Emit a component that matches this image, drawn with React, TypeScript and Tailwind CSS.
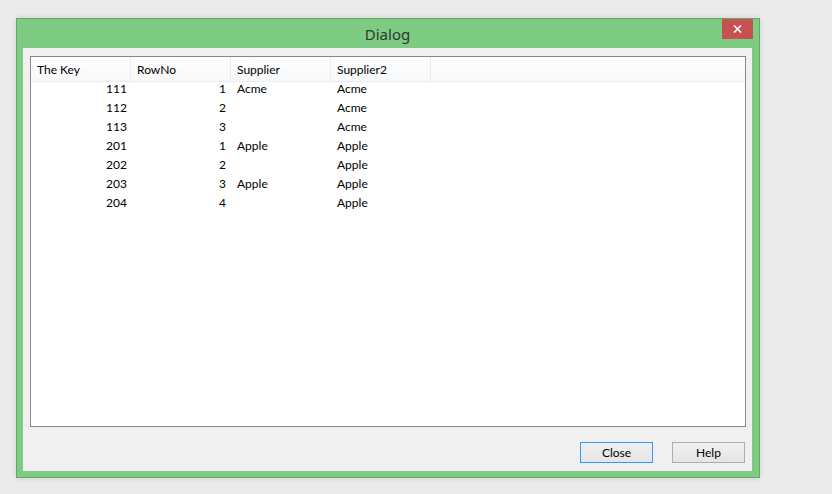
import React from "react";

const rows = [
  { key: "111", no: "1", s: "Acme", s2: "Acme" },
  { key: "112", no: "2", s: "", s2: "Acme" },
  { key: "113", no: "3", s: "", s2: "Acme" },
  { key: "201", no: "1", s: "Apple", s2: "Apple" },
  { key: "202", no: "2", s: "", s2: "Apple" },
  { key: "203", no: "3", s: "Apple", s2: "Apple" },
  { key: "204", no: "4", s: "", s2: "Apple" },
];

const headers = ["The Key", "RowNo", "Supplier", "Supplier2"];

const ui = { fontFamily: 'Lato, "Noto Sans", "Liberation Sans", sans-serif' };

export default function App() {
  return (
    <div
      className="w-[832px] h-[494px] bg-[#ebebeb] pt-[18px] pl-[16px] overflow-hidden"
      style={{ fontFamily: '"Noto Sans", "Liberation Sans", sans-serif' }}
    >
      <div className="w-[744px] h-[460px] border border-[#62a867] bg-[#7ecb84] flex flex-col pl-[6px] pr-[7px] pb-[6px] shadow-[0_0_6px_rgba(0,0,0,0.12)]">
        {/* title bar */}
        <div className="h-[29px] flex items-start relative shrink-0">
          <div className="flex-1 text-center text-[15px] leading-[30px] text-[#2b3a2d] pl-[30px]">Dialog</div>
          <div className="w-[31px] h-[20px] bg-[#c75050] flex items-center justify-center mr-[-1px]">
            <svg width="9" height="8" viewBox="0 0 9 8">
              <path d="M1 0.5 L8 7.5 M8 0.5 L1 7.5" stroke="#ffffff" strokeWidth="1.6" />
            </svg>
          </div>
        </div>
        {/* client */}
        <div className="flex-1 bg-[#f0f0f0] flex flex-col pl-[7px] pr-[6px] pt-[8px] pb-[8px]" style={ui}>
          <div className="h-[371px] border border-[#828790] bg-white flex flex-col">
            <div className="h-[25px] flex bg-gradient-to-b from-[#ffffff] to-[#f7f8fa] border-b border-[#e8eef6] shrink-0">
              {headers.map((h) => (
                <div
                  key={h}
                  className="w-[100px] border-r border-[#e6edf5] text-[12px] text-[#000] pl-[6px] pt-[1px] flex items-center"
                >
                  {h}
                </div>
              ))}
            </div>
            {rows.map((r, i) => (
              <div key={i} className="h-[19px] flex text-[12px] leading-[14px] text-[#000] items-start">
                <div className="w-[100px] text-right pr-[4px]">{r.key}</div>
                <div className="w-[100px] text-right pr-[5px]">{r.no}</div>
                <div className="w-[100px] pl-[6px]">{r.s}</div>
                <div className="w-[100px] pl-[6px]">{r.s2}</div>
              </div>
            ))}
          </div>
          <div className="flex justify-end gap-[19px] mt-[15px] pr-[1px]">
            <button className="w-[73px] h-[21px] border border-[#3399ff] bg-gradient-to-b from-[#f0f0f0] to-[#e5e5e5] text-[12px] text-[#000] flex items-center justify-center">
              Close
            </button>
            <button className="w-[73px] h-[21px] border border-[#adadad] bg-gradient-to-b from-[#f0f0f0] to-[#e5e5e5] text-[12px] text-[#000] flex items-center justify-center">
              Help
            </button>
          </div>
        </div>
      </div>
    </div>
  );
}
